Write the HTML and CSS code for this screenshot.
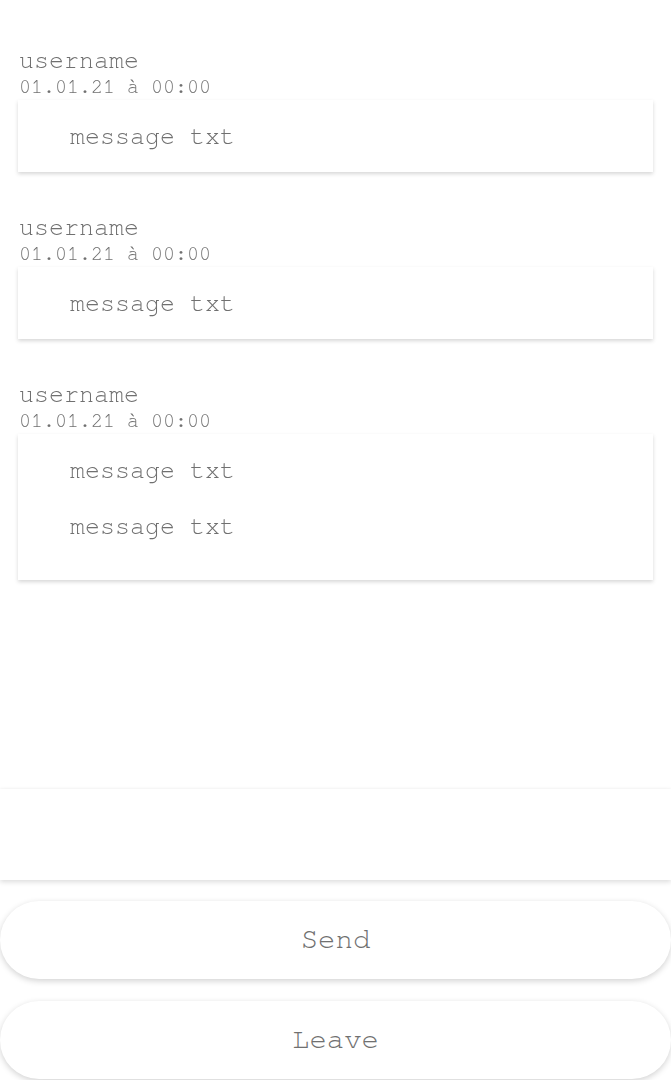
FILE: index.html
```html
<!DOCTYPE html>
<html lang="fr">
<head>
<meta charset="utf-8">
<title>Chat</title>
<link rel="stylesheet" href="styles.css">
</head>
<body>
<div class="app">
  <section class="messages">
    <article class="post">
      <div class="user">username</div>
      <div class="date">01.01.21 à 00:00</div>
      <div class="card">
        <p class="msg">message txt</p>
      </div>
    </article>
    <article class="post">
      <div class="user">username</div>
      <div class="date">01.01.21 à 00:00</div>
      <div class="card">
        <p class="msg">message txt</p>
      </div>
    </article>
    <article class="post">
      <div class="user">username</div>
      <div class="date">01.01.21 à 00:00</div>
      <div class="card card--multi">
        <p class="msg">message txt</p>
        <p class="msg">message txt</p>
      </div>
    </article>
  </section>
  <div class="composer"></div>
  <div class="actions">
    <button class="btn">Send</button>
    <button class="btn">Leave</button>
  </div>
</div>
</body>
</html>
```

FILE: styles.css
```css
html, body {
  margin: 0;
  padding: 0;
  background: #ffffff;
}
body {
  font-family: FreeMono, "Courier New", monospace;
  color: #707070;
  -webkit-font-smoothing: antialiased;
}
.app {
  height: 1080px;
  display: flex;
  flex-direction: column;
}
.messages {
  flex: 1;
  padding: 49px 18px 0 18px;
  display: flex;
  flex-direction: column;
  gap: 44px;
}
.post {
  display: flex;
  flex-direction: column;
  will-change: transform;
}
.user {
  font-size: 25px;
  line-height: 23px;
  margin-bottom: 4px;
  padding-left: 1px;
}
.date {
  font-size: 20px;
  line-height: 23px;
  padding-left: 1px;
  margin-bottom: 1px;
}
.card {
  background: #fff;
  padding: 23px 0 21px 52px;
  box-shadow: 0 2px 4px rgba(0, 0, 0, 0.16);
  display: flex;
  flex-direction: column;
  gap: 28px;
}
.card--multi {
  padding-bottom: 39px;
}
.msg {
  margin: 0;
  font-size: 25px;
  line-height: 28px;
}
.composer {
  height: 91px;
  background: #fff;
  box-shadow: 0 2px 5px rgba(0, 0, 0, 0.14), 0 -1px 2px rgba(0, 0, 0, 0.02);
}
.actions {
  display: flex;
  flex-direction: column;
  gap: 22px;
  padding: 21px 0 1px 0;
}
.btn {
  height: 78px;
  width: 100%;
  border: none;
  border-radius: 39px;
  background: #fff;
  font-family: FreeMono, "Courier New", monospace;
  font-size: 29px;
  color: #707070;
  box-shadow: 0 2px 6px rgba(0, 0, 0, 0.18);
  padding: 0 0 2px 0;
}
```
